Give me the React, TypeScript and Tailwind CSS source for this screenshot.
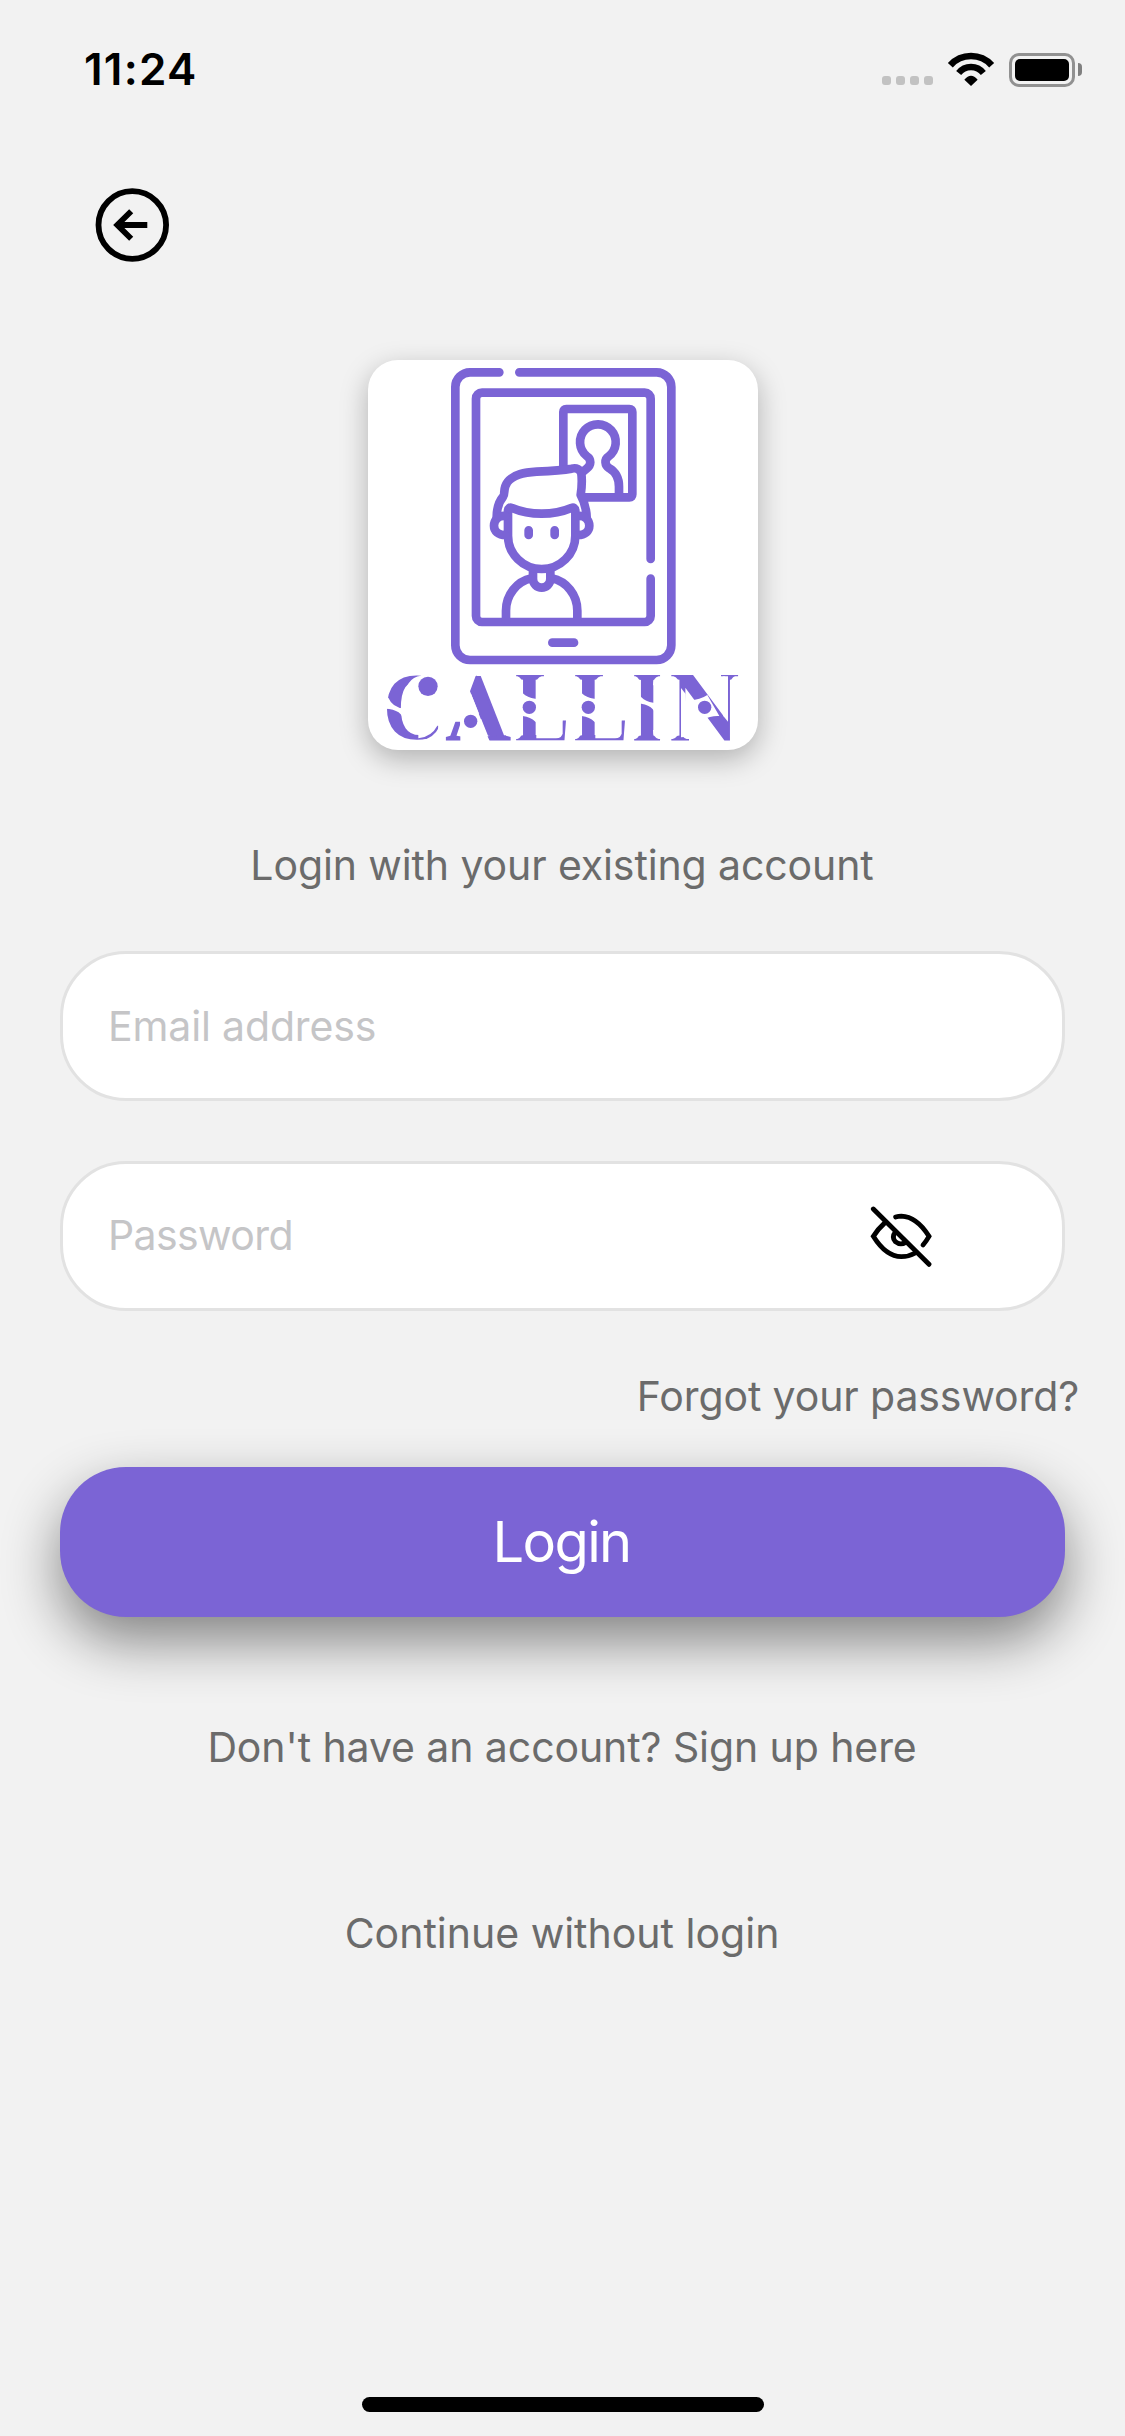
import React from "react";

const PURPLE = "#7b64d5";

function StatusBar() {
  return (
    <header className="flex h-[138px] items-center justify-between pl-[84px] pr-[43px]">
      <span className="text-[44px] leading-none font-semibold tracking-[1.25px] text-black">11:24</span>
      <div className="flex items-end">
        <div className="mb-[2px] flex gap-[5px]">
          {[0, 1, 2, 3].map((i) => (
            <span key={i} className="size-[9px] rounded-[3px] bg-[#c2c2c2]" />
          ))}
        </div>
        <svg className="mb-px ml-[14px] h-[34px] w-[48px]" viewBox="261 64 144 102" fill="none" stroke="#000">
          <path d="M271 103.5A83.6 83.6 0 0 1 395 103.5" strokeWidth="20" />
          <path d="M296 127A47 47 0 0 1 370 127" strokeWidth="19" />
          <path d="M313 147Q333 123 353 147L333 166Z" fill="#000" stroke="none" />
        </svg>
        <div className="ml-[14px] flex items-center gap-[3px]">
          <div className="h-[34px] w-[66px] rounded-[10px] border-[3px] border-[#919191] p-[3px]">
            <div className="h-full rounded-[5px] bg-black" />
          </div>
          <span className="h-[13px] w-[4px] rounded-r-full bg-[#808080]" />
        </div>
      </div>
    </header>
  );
}

function BackButton() {
  return (
    <button aria-label="Back" className="mt-[49px] ml-[95px] block size-[75px]">
      <svg className="size-full" viewBox="95 187 75 75" fill="none" stroke="#000" strokeWidth="5.8">
        <circle cx="132.3" cy="225" r="33.8" />
        <path d="M131.2 211.2L117.3 225L131.2 238.8M147.3 225H117.3" />
      </svg>
    </button>
  );
}

function LCuts() {
  return (
    <>
      <path d="M490 1009H502Q516 1012 517 1036H490Z" />
      <path d="M586 1009H575Q559 1012 558 1036H586Z" />
      <path d="M490 1197H502Q516 1194 517 1170H490Z" />
      <path d="M505 1035Q515 1076 568 1077V1170Q560 1128 505 1127Z" />
      <path d="M559 1140H638V1180Q636 1195 618 1195H559Z" />
    </>
  );
}

function Wordmark() {
  return (
    <g>
      <g className="font-['Liberation_Serif',serif] font-bold" fontSize="300" fill={PURPLE}>
        <text transform="translate(97.9 1196.5) scale(.859 .95)">C</text>
        <text transform="translate(285 1201) scale(.918 .975)">A</text>
        <text transform="translate(494.1 1201) scale(.82 1)">L</text>
        <text transform="translate(671.1 1201) scale(.82 1)">L</text>
        <text transform="translate(844.5 1201) scale(.803 1)">I</text>
        <text transform="translate(958.5 1201) scale(.967 1)">N</text>
      </g>
      <path fill={PURPLE} d="M380 1006L360 1054L414 1187L440 1190L440 1150L400 1050Z" />
      <g fill="#fff">
        <path d="M213 1000H275V1085H160Q166 1012 213 1007Z" />
        <path d="M105 1070L115 1073Q128 1103 162 1105V1145Q158 1108 105 1106Z" />
        <path d="M205 1195Q245 1190 262 1157H275V1130H240L205 1140Z" />
        <path d="M268 1160Q250 1197 210 1202H275V1160Z" />
        <path d="M300 1000H380L360 1054L412 1187L420 1205H331V1170L330 1145H305Z" />
        <path d="M389 1000L462 1186H492V1000Z" />
        <LCuts />
        <g transform="translate(177 0)">
          <LCuts />
        </g>
        <path d="M846 1009H856Q869 1012 870 1036H846Z" />
        <path d="M940 1009H926Q910 1012 909 1036H940Z" />
        <path d="M846 1197H856Q869 1194 870 1170H846Z" />
        <path d="M940 1197H926Q910 1194 909 1170H940Z" />
        <path d="M862 1048Q870 1088 922 1089V1135Q912 1092 862 1090Z" />
        <path d="M1012 1080Q1045 1083 1072 1065L1108 1128Q1085 1126 1055 1140Z" />
        <path d="M993 1044L1007 1062L1012 1190L993 1192Z" />
        <path d="M1120 1009V1128L1134 1145V1009Z" />
        <path d="M1085 1000H1113V1030H1085Z" />
        <path d="M1017 1180H1036V1206H1017Z" />
        <path d="M956 1009H970Q986 1012 987 1036H956Z" />
        <path d="M1170 1009H1155Q1142 1012 1141 1036H1170Z" />
        <path d="M1110 1009H1122Q1134 1012 1134 1036H1110Z" />
        <path d="M956 1197H968Q984 1194 987 1170H956Z" />
        <path d="M1024 1197H1010Q995 1194 993 1170H1024Z" />
      </g>
      <g fill={PURPLE}>
        <circle cx="234" cy="1039" r="29" />
        <circle cx="362" cy="1144" r="20" />
        <circle cx="538" cy="1102" r="20" />
        <circle cx="715" cy="1102" r="20" />
        <circle cx="1064" cy="1102" r="20" />
      </g>
    </g>
  );
}

function Logo() {
  return (
    <div className="mx-auto mt-[98px] size-[390px] rounded-[30px] bg-white shadow-[0_9px_28px_rgba(0,0,0,0.27)]">
      <svg className="size-full overflow-visible" viewBox="54 60 1170 1170" fill="none">
        <g stroke={PURPLE} strokeWidth="26" strokeLinecap="round">
          <path d="M448 97H360A44 44 0 0 0 316 141V916A44 44 0 0 0 360 960H920A44 44 0 0 0 964 916V141A44 44 0 0 0 920 97H508" />
          <path d="M902 657V176A18 18 0 0 0 884 158H396A18 18 0 0 0 378 176V828A18 18 0 0 0 396 846H884A18 18 0 0 0 902 828V716" />
          <path d="M607 908H672" />
          <path d="M640 385V216Q640 207 649 207H838Q847 207 847 216V463Q847 472 838 472H700" />
          <path d="M807 465V440C807 415 795 395 778 385C764 376 762 358 776 349A53.5 53.5 0 1 0 710 348C725 358 724 375 710 386L700 394" />
          <path d="M468 840V812C468 765 500 724 545 715" />
          <path d="M682 840V812C682 765 650 724 605 715" />
          <path d="M549 694V717A26 26 0 0 0 601 717V694" />
          <path fill="#fff" d="M440 532C440 504 446 485 460 469C466 462 458 445 472 427C490 402 525 397 560 395C600 393 635 391 665 386C680 382 690 388 694 400C697 425 695 445 692 465C703 485 709 505 710 532L676 512Q672 500 662 505C638 516 610 521 575 521C540 521 512 515 488 505Q478 500 474 512Z" stroke="none" />
          <path strokeLinejoin="round" d="M440 532C440 504 446 485 460 469C466 462 458 445 472 427C490 402 525 397 560 395C600 393 635 391 665 386C680 382 690 388 694 400C697 425 695 445 692 465C703 485 709 505 710 532" />
          <path d="M474 587V512Q475 500 486 504C512 515 540 521 575 521C610 521 638 515 664 504Q675 500 676 512V587A101 100 0 0 1 474 587Z" />
          <path d="M466 528C443 526 432 542 432 557C432 573 445 585 466 585" />
          <path d="M684 528C707 526 718 542 718 557C718 573 705 585 684 585" />
          <path d="M536 571V585M614 571V585" />
        </g>
        <Wordmark />
      </svg>
    </div>
  );
}

function EyeOff() {
  return (
    <svg className="size-[63px]" viewBox="90 135 189 189" fill="none" stroke="#000" strokeWidth="14.5" strokeLinecap="round">
      <path d="M100 147L267 313" />
      <path d="M135 188Q114 207 100 229Q138 290 184 290Q206 290 226 279" />
      <path d="M167 171Q175 168.5 184 168.5Q230 170 267 229Q259 243 249 255" />
      <path d="M166 216Q154 232 166 245Q181 257 197 247" />
    </svg>
  );
}

const fieldClass =
  "flex h-[150px] items-center rounded-[66px] border-[3px] border-[#e2e2e2] bg-white";
const inputClass =
  "h-full min-w-0 flex-1 bg-transparent pl-[45px] text-[41px] outline-none placeholder:text-[#c5c5c7]";

export default function App() {
  return (
    <div className="flex h-[2436px] w-[1125px] flex-col overflow-hidden bg-[#f2f2f2] font-[Inter,sans-serif] text-[41px] leading-[50px] text-[#6b6b6b]">
      <StatusBar />
      <BackButton />
      <Logo />
      <p className="mt-[90px] pr-px text-center tracking-[-0.11px]">Login with your existing account</p>

      <form className="mt-[61px] flex flex-col px-[60px]" onSubmit={(e) => e.preventDefault()}>
        <div className={fieldClass}>
          <input className={`${inputClass} tracking-[-0.15px]`} type="email" placeholder="Email address" />
        </div>
        <div className={`${fieldClass} mt-[60px]`}>
          <input className={`${inputClass} pb-[2px] tracking-[-0.6px]`} type="password" placeholder="Password" />
          <button type="button" aria-label="Show password" className="mr-[129px]">
            <EyeOff />
          </button>
        </div>
        <a className="mt-[60px] -mr-[14px] self-end tracking-[-0.12px]">Forgot your password?</a>
        <button className="mt-[46px] h-[150px] rounded-[66px] bg-[#7b64d5] pr-[2px] text-[56px] tracking-[-1.6px] text-white shadow-[0_24px_56px_rgba(0,0,0,0.46)]">
          Login
        </button>
      </form>

      <p className="mt-[105px] pr-px text-center tracking-[-0.09px]">Don't have an account? Sign up here</p>
      <p className="mt-[136px] pr-px text-center">Continue without login</p>

      <div className="mx-auto mt-auto mb-[24px] h-[15px] w-[402px] rounded-full bg-black" />
    </div>
  );
}
